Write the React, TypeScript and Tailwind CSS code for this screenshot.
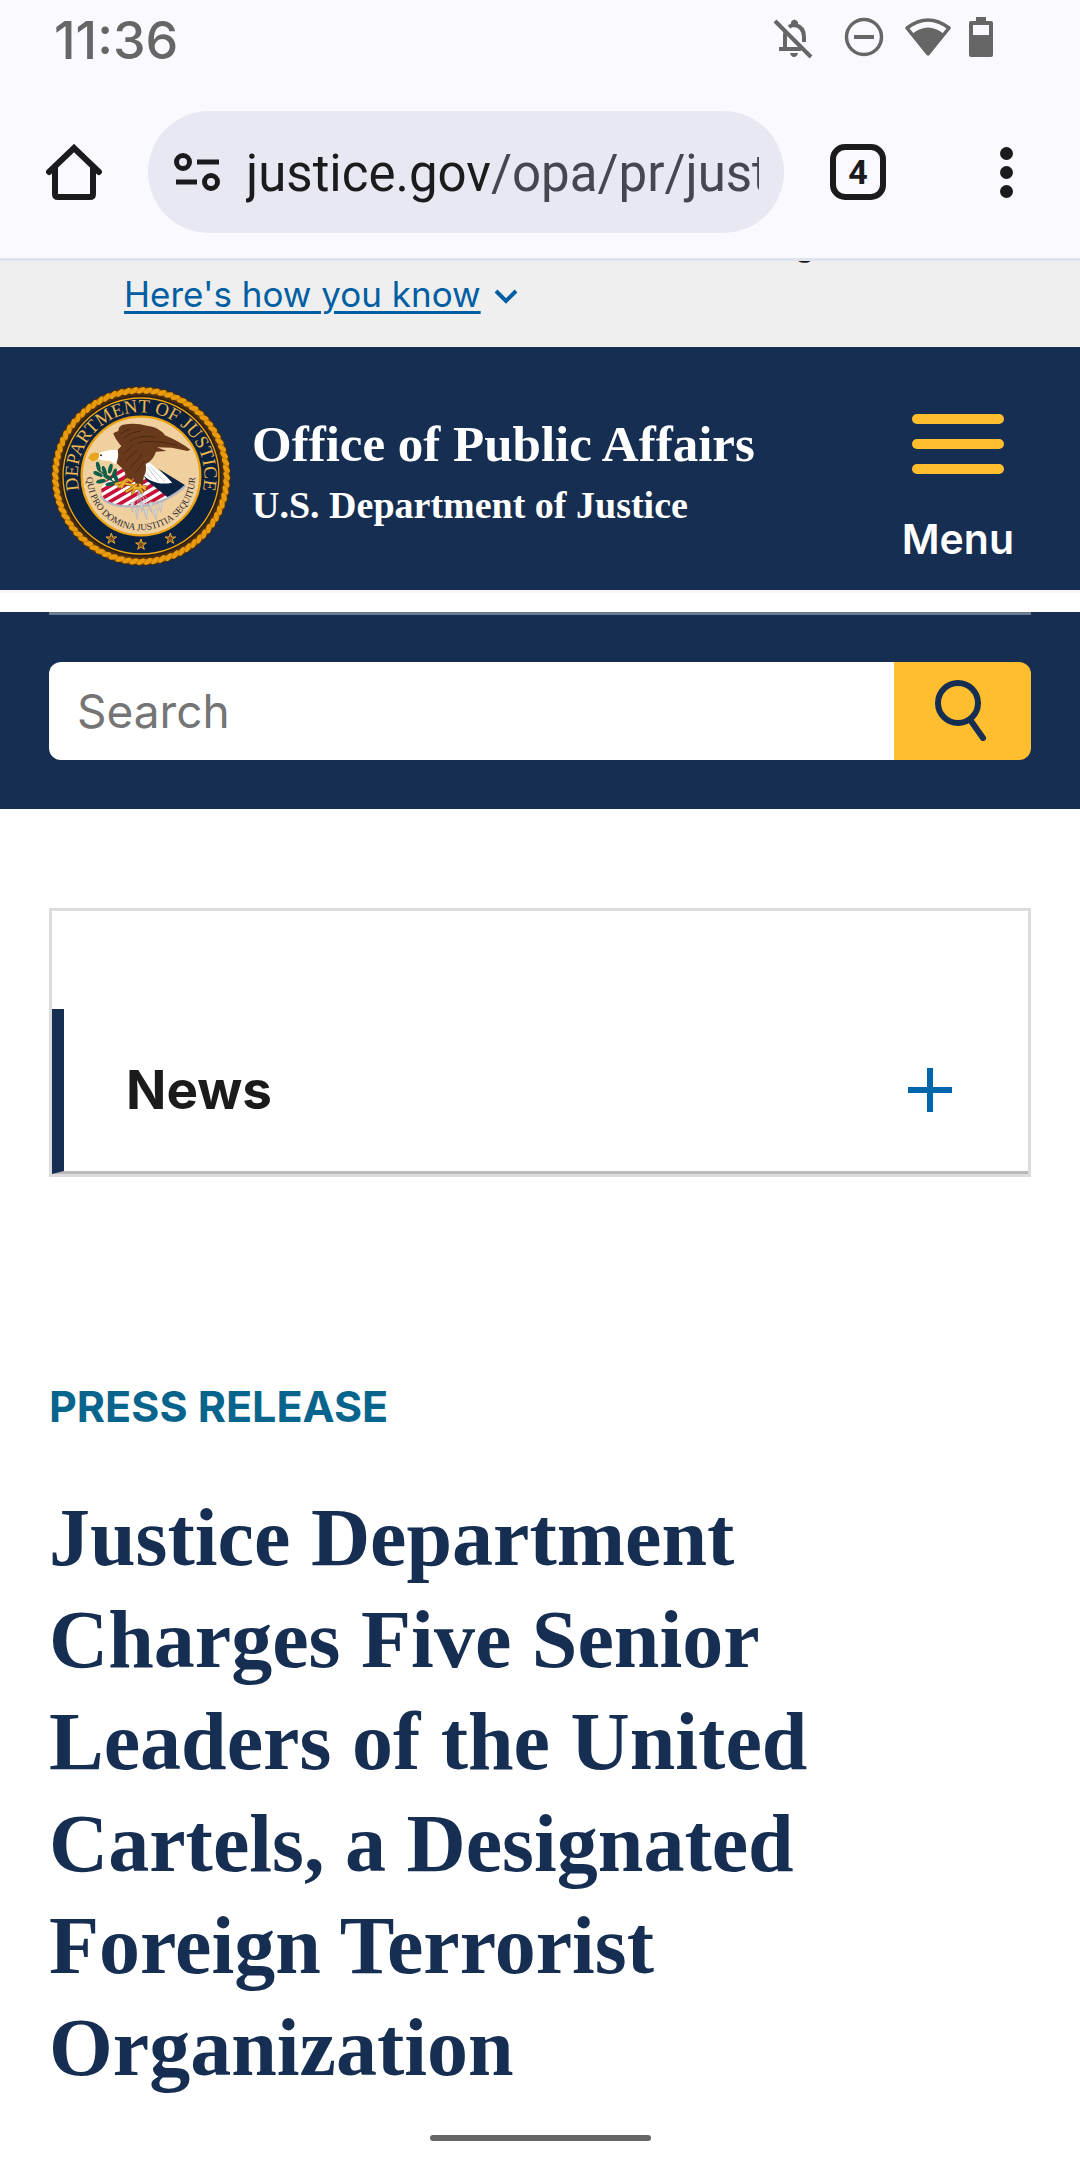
const ropeTwists = Array.from({ length: 76 }, (_, i) => (i * 360) / 76);

const sealStars = [
  { x: 243, y: 506 },
  { x: 332, y: 524 },
  { x: 420, y: 506 },
];

const oliveLeaves = [
  { x: 204, y: 290, angle: 75 },
  { x: 203, y: 312, angle: 25 },
  { x: 212, y: 334, angle: -10 },
  { x: 222, y: 302, angle: 70 },
  { x: 240, y: 296, angle: 105 },
  { x: 232, y: 322, angle: 30 },
  { x: 252, y: 310, angle: 110 },
  { x: 240, y: 342, angle: -10 },
  { x: 258, y: 328, angle: 70 },
];

const arrowTips = [304, 318, 332, 346, 360, 374, 388];

const Seal = () => {
  return (
    <svg
      viewBox="62 48 540 540"
      className="h-[180px] w-[180px] shrink-0"
      role="img"
      aria-label="Department of Justice seal"
    >
      <defs>
        <path id="seal-top" d="M149.6 370.3A190 190 0 1 1 514.4 370.3" />
        <path id="seal-motto" d="M169.5 305A163 163 0 1 0 494.5 305" />
        <clipPath id="seal-shield">
          <path d="M212 356Q240 308 275 292L300 330L345 322L414 382Q330 418 240 402Q213 388 212 356Z" />
        </clipPath>
      </defs>

      <circle cx="332" cy="318" r="269" fill="#4a2e10" />
      <circle cx="332" cy="318" r="257" fill="none" stroke="#a86a10" strokeWidth="16" />
      {ropeTwists.map((angle) => (
        <ellipse
          key={angle}
          cx="332"
          cy="61"
          rx="14"
          ry="7"
          fill="#e99b0c"
          transform={`rotate(${angle} 332 318) rotate(-34 332 61)`}
        />
      ))}
      <circle cx="332" cy="318" r="242" fill="#2c2018" />
      <circle cx="332" cy="318" r="234" fill="#0a2240" stroke="#f0a50c" strokeWidth="4" />
      <circle cx="332" cy="318" r="178" fill="#f0d09f" stroke="#eaa112" strokeWidth="7" />

      <text
        fill="#edb84e"
        textAnchor="middle"
        className="font-['Liberation_Serif',serif] text-[56px]"
      >
        <textPath href="#seal-top" startOffset="50%">
          DEPARTMENT OF JUSTICE
        </textPath>
      </text>
      <text
        fill="#2b2a30"
        textAnchor="middle"
        className="font-['Liberation_Serif',serif] text-[28px]"
      >
        <textPath href="#seal-motto" startOffset="50%">
          QUI PRO DOMINA JUSTITIA SEQUITUR
        </textPath>
      </text>

      {sealStars.map(({ x, y }) => (
        <path
          key={x}
          d="M0 -17L4 -5L16 -5L6 2L10 14L0 7L-10 14L-6 2L-16 -5L-4 -5Z"
          fill="#7a4d17"
          stroke="#eaa83a"
          strokeWidth="3"
          transform={`translate(${x} ${y})`}
        />
      ))}

      {/* shield */}
      <g clipPath="url(#seal-shield)">
        <rect x="200" y="280" width="230" height="140" fill="#ffffff" />
        <g stroke="#c8123a" strokeWidth="11">
          <path d="M200 322L310 258M200 346L330 270M200 370L345 286M200 394L360 301M210 412L380 313M240 418L400 325M275 422L415 341M310 426L430 356M350 428L440 376" />
        </g>
      </g>
      <path
        d="M340 318L350 332L412 382Q445 367 465 346L384 296L425 338Q385 344 340 318Z"
        fill="#0b2342"
      />
      <path
        d="M211 378Q222 398 260 406Q340 418 400 391Q440 372 466 347"
        fill="none"
        stroke="#b4b8c3"
        strokeWidth="7"
      />

      {/* olive branch */}
      <path d="M205 300L262 345" stroke="#0d5b45" strokeWidth="4" />
      {oliveLeaves.map(({ x, y, angle }) => (
        <ellipse
          key={`${x}-${y}`}
          cx={x}
          cy={y}
          rx="15"
          ry="6"
          fill="#0d5f49"
          transform={`rotate(${angle} ${x} ${y})`}
        />
      ))}

      {/* arrows */}
      <g stroke="#b3b5ba" strokeWidth="2" fill="#d8d9dc">
        {arrowTips.map((x, i) => {
          const y = 420 + (i % 2) * 22;
          return (
            <path key={x} d={`M326 362L${x} ${y}M${x - 4} ${y - 22}L${x + 7} ${y - 24}L${x + 3} ${y + 7}Z`} />
          );
        })}
      </g>

      {/* eagle */}
      <path
        d="M348 274L340 316Q356 334 380 338Q402 343 425 338Q404 312 378 296Q362 278 348 274Z"
        fill="#ffffff"
      />
      <path d="M352 292L384 334M360 290L404 336M346 308L364 328" stroke="#a9adb8" strokeWidth="2" />
      <path
        d="M262 240L273 228Q254 208 249 190Q256 185 264 183Q264 168 278 164Q316 158 350 167Q376 170 390 182Q398 186 404 196Q450 216 480 239L472 243L424 233L380 232L408 243L377 245Q368 272 346 282Q350 304 340 320L338 342L318 345L308 324L302 338L286 326Q288 306 272 292L258 278Q254 262 262 240Z"
        fill="#683a1b"
      />
      <path
        d="M270 192Q286 178 300 178M280 205Q300 186 330 184M296 215Q330 192 372 202M320 220Q360 206 440 226M280 250Q296 240 310 224M286 272Q304 256 322 240M300 292Q320 276 336 252M316 308Q330 292 342 272"
        fill="none"
        stroke="#4a2611"
        strokeWidth="3"
      />
      <path
        d="M262 240Q236 236 206 250L200 264Q214 274 238 272L256 283Q267 262 262 240Z"
        fill="#ffffff"
      />
      <path d="M206 250Q180 244 174 264L184 274Q198 274 206 262Z" fill="#e8a41c" />
      <circle cx="212" cy="256" r="3" fill="#3a2412" />
      <path
        d="M256 342L280 336L290 328M266 350L284 340L306 346M280 340L274 352M292 328L304 334M288 364L306 354L318 344M306 370L314 354L328 356L336 366M314 354L346 350M328 344L344 358"
        fill="none"
        stroke="#8a5a10"
        strokeWidth="9"
        strokeLinecap="round"
      />
      <path
        d="M256 342L280 336L290 328M266 350L284 340L306 346M280 340L274 352M292 328L304 334M288 364L306 354L318 344M306 370L314 354L328 356L336 366M314 354L346 350M328 344L344 358"
        fill="none"
        stroke="#f0b02c"
        strokeWidth="6"
        strokeLinecap="round"
      />
    </svg>
  );
};

const StatusBar = () => {
  return (
    <div className="flex items-start justify-between pr-[86px] pl-[54px] text-[#666666]">
      <span className="pt-[10px] font-['Inter',sans-serif] text-[52px] leading-[62px] font-medium">
        11:36
      </span>
      <svg viewBox="772 14 222 46" className="mt-[14px] h-[46px] w-[222px]" fill="none">
        {/* muted bell */}
        <path
          d="M785 50V35Q785 32 787 29M789 27Q791 25 795 25Q804 27 804 37V42"
          stroke="currentColor"
          strokeWidth="4"
        />
        <path d="M779 49H801" stroke="currentColor" strokeWidth="4" />
        <path d="M791 25V22Q794 17 798 22V25Z" fill="currentColor" />
        <path d="M790 53H798Q797 57 794 57Q791 57 790 53Z" fill="currentColor" />
        <path d="M778 19L813 56" stroke="#faf9ff" strokeWidth="4" />
        <path d="M775 21L811 57" stroke="currentColor" strokeWidth="4" />
        {/* do not disturb */}
        <circle cx="864" cy="37" r="17.5" stroke="currentColor" strokeWidth="3.5" />
        <path d="M854 37H874" stroke="currentColor" strokeWidth="4" />
        {/* wifi */}
        <path
          d="M907 28Q928 12 949 28L928 54Z"
          stroke="currentColor"
          strokeWidth="3.5"
          strokeLinejoin="round"
        />
        <path d="M912 34Q928 21 944 34L928 55Z" fill="currentColor" />
        {/* battery */}
        <path
          d="M976 17H986V21H991Q993 21 993 23V55Q993 57 991 57H971Q969 57 969 55V23Q969 21 971 21H976Z"
          fill="currentColor"
        />
        <path d="M973 25H989V35H973Z" fill="#faf9ff" />
      </svg>
    </div>
  );
};

const AddressBar = () => {
  return (
    <div className="flex items-center pr-[68px] pl-[46px] text-[#1b1b1d]">
      <button aria-label="Home" className="mr-[46px]">
        <svg viewBox="0 0 56 56" className="h-14 w-14" fill="none" stroke="currentColor">
          <path
            d="M3 28L28 4L53 28M9 24V50Q9 53 12 53H44Q47 53 47 50V24"
            strokeWidth="6"
            strokeLinecap="round"
          />
        </svg>
      </button>
      <button className="flex h-[122px] min-w-0 flex-1 items-center rounded-full bg-[#e7e8f1] pr-[25px] pl-[26px]">
        <svg viewBox="0 0 46 38" className="h-[38px] w-[46px] shrink-0" fill="none" stroke="currentColor" strokeWidth="5">
          <circle cx="9" cy="9" r="6.5" />
          <path d="M23 9H45M2 29H23" />
          <circle cx="37" cy="29" r="6.5" />
        </svg>
        <span className="ml-[26px] min-w-0 flex-1 overflow-hidden pt-[4px] text-left font-['Roboto',sans-serif] text-[51px] leading-[68px] whitespace-nowrap">
          justice.gov<span className="text-[#45464f]">/opa/pr/just</span>
        </span>
      </button>
      <button
        aria-label="Switch tabs"
        className="ml-[46px] flex h-14 w-14 items-center justify-center rounded-[15px] border-6 border-current font-['Roboto',sans-serif] text-[34px] leading-none font-bold"
      >
        4
      </button>
      <button aria-label="More options" className="ml-[114px] flex w-[12px] flex-col items-center gap-[6px]">
        <span className="h-[13px] w-[13px] rounded-full bg-current" />
        <span className="h-[13px] w-[13px] rounded-full bg-current" />
        <span className="h-[13px] w-[13px] rounded-full bg-current" />
      </button>
    </div>
  );
};

const GovBanner = () => {
  return (
    <div className="h-[86px] overflow-hidden bg-[#efefef] pl-[124px] font-['Inter',sans-serif] leading-[50px]">
      <p className="-mt-[44px] mb-[2px] text-[36px] whitespace-nowrap text-[#1b1b1b]">
        An official website of the United States government
      </p>
      <button className="flex items-center text-[35px] text-[#005ea2]">
        <span className="underline decoration-3 underline-offset-4">Here's how you know</span>
        <svg viewBox="0 0 24 16" className="mt-[4px] ml-[13px] h-4 w-6" fill="none">
          <path d="M2 3L12 13L22 3" stroke="currentColor" strokeWidth="4" />
        </svg>
      </button>
    </div>
  );
};

const SiteHeader = () => {
  return (
    <header>
      <div className="flex items-start bg-[#162e51] pt-[39px] pr-[66px] pb-[24px] pl-[51px] text-white">
        <Seal />
        <div className="ml-[21px] flex-1 pt-[26px] font-['Liberation_Serif',serif] font-bold">
          <a href="#" className="block text-[51px] leading-[64px]">
            Office of Public Affairs
          </a>
          <a href="#" className="block text-[38px] leading-[58px]">
            U.S. Department of Justice
          </a>
        </div>
        <button className="flex flex-col items-center pt-[28px]">
          <span className="flex flex-col gap-[15px]">
            <span className="h-[10px] w-[92px] rounded-full bg-[#ffbe2e]" />
            <span className="h-[10px] w-[92px] rounded-full bg-[#ffbe2e]" />
            <span className="h-[10px] w-[92px] rounded-full bg-[#ffbe2e]" />
          </span>
          <span className="mt-[40px] font-['Inter',sans-serif] text-[41px] leading-[50px] font-semibold">
            Menu
          </span>
        </button>
      </div>
      <div className="mb-[19px] h-[3px] bg-[#f9f7f5]" />
      <div className="bg-[#162e51] px-[49px] pb-[49px]">
        <div className="border-t-3 border-[#6c7a92] pt-[47px]">
          <form className="flex h-[98px] overflow-hidden rounded-xl">
            <input
              type="search"
              aria-label="Search"
              placeholder="Search"
              className="min-w-0 flex-1 bg-white pl-[28px] font-['Inter',sans-serif] text-[46px] outline-none placeholder:text-[#757575]"
            />
            <button type="button" aria-label="Submit search" className="flex w-[137px] justify-center bg-[#ffbe2e] pt-[17px]">
              <svg viewBox="0 0 56 62" className="h-[62px] w-[56px]" fill="none" stroke="#162e51" strokeLinecap="round">
                <circle cx="23" cy="24" r="20" strokeWidth="6" />
                <path d="M36 42L48 59" strokeWidth="6" />
              </svg>
            </button>
          </form>
        </div>
      </div>
    </header>
  );
};

export default function App() {
  return (
    <div className="min-h-screen bg-white">
      <div className="border-b-3 border-[#dfe3ed] bg-[#faf9ff] pb-[25px]">
        <StatusBar />
        <div className="pt-[39px]">
          <AddressBar />
        </div>
      </div>
      <GovBanner />
      <SiteHeader />

      <main className="px-[49px] pt-[99px]">
        <nav className="border-3 border-[#dcdcdc] pt-[98px]">
          <button className="flex h-[165px] w-full items-center justify-between border-b-3 border-l-12 border-b-[#b9b9b9] border-l-[#162e51] pr-[76px] pl-[62px]">
            <span className="font-['Inter',sans-serif] text-[53px] leading-[66px] font-bold text-[#1b1b1b]">
              News
            </span>
            <svg viewBox="0 0 44 44" className="h-11 w-11" stroke="#0066ab" strokeWidth="6">
              <path d="M22 0V44M0 22H44" />
            </svg>
          </button>
        </nav>

        <p className="mt-[204px] font-['Inter',sans-serif] text-[43px] leading-[50px] font-bold text-[#07648d] uppercase">
          Press Release
        </p>
        <h1 className="mt-[56px] max-w-[860px] font-['Liberation_Serif',serif] text-[82px] leading-[102px] font-bold text-[#162e51]">
          Justice Department Charges Five Senior Leaders of the United Cartels, a Designated Foreign
          Terrorist Organization
        </h1>
      </main>

      <div className="mx-auto mt-[36px] h-[6px] w-[221px] rounded-full bg-[#666666]" />
    </div>
  );
}
